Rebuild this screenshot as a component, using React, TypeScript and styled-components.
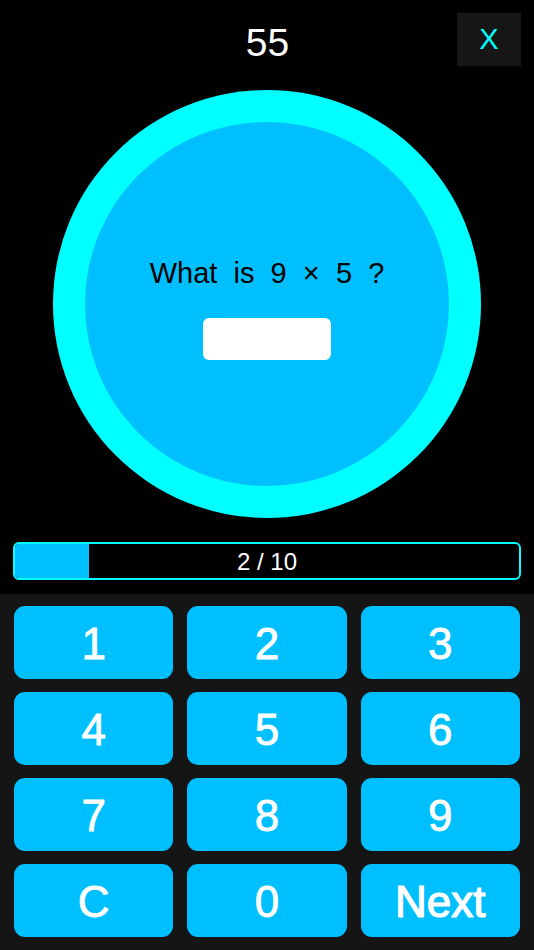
import React from "react";
import styled, { createGlobalStyle } from "styled-components";

const Global = createGlobalStyle`
  html, body { margin: 0; padding: 0; background: #000; }
  body { font-family: "Liberation Sans", Arial, sans-serif; }
  * { box-sizing: border-box; }
`;

const Page = styled.div`
  width: 534px;
  height: 950px;
  background: #000;
  display: flex;
  flex-direction: column;
  overflow: hidden;
`;

const Header = styled.div`
  display: grid;
  grid-template-columns: 64px 1fr 64px;
  align-items: center;
  padding: 13px 13px 0 14px;
  height: 66px;
`;

const Score = styled.div`
  grid-column: 2;
  text-align: center;
  color: #fff;
  font-size: 39px;
  line-height: 1;
  padding-top: 6px;
`;

const CloseButton = styled.button`
  grid-column: 3;
  width: 64px;
  height: 53px;
  border: none;
  border-radius: 0;
  background: #161616;
  color: #00ffff;
  font-family: "Liberation Sans", Arial, sans-serif;
  font-size: 29px;
  padding: 0;
  display: flex;
  align-items: center;
  justify-content: center;
`;

const Stage = styled.div`
  display: flex;
  justify-content: center;
  margin-top: 24px;
`;

const Ring = styled.div`
  width: 428px;
  height: 428px;
  border-radius: 50%;
  background: #00ffff;
  padding: 32px;
`;

const Disc = styled.div`
  width: 100%;
  height: 100%;
  border-radius: 50%;
  background: #00bfff;
  display: flex;
  flex-direction: column;
  align-items: center;
  justify-content: center;
  gap: 28px;
  padding-top: 7px;
`;

const Question = styled.div`
  color: #000;
  font-size: 29px;
  line-height: 34px;
  white-space: pre;
`;

const AnswerBox = styled.div`
  width: 128px;
  height: 42px;
  background: #fff;
  border-radius: 6px;
`;

const Progress = styled.div`
  position: relative;
  margin: 24px 13px 0 13px;
  height: 38px;
  border: 2px solid #00ffff;
  border-radius: 6px;
  background: #000;
  overflow: hidden;
  display: flex;
  align-items: center;
  justify-content: center;
`;

const Fill = styled.div<{ $pct: number }>`
  position: absolute;
  left: 0;
  top: 0;
  bottom: 0;
  width: ${(p) => p.$pct}%;
  background: #00bfff;
`;

const ProgressLabel = styled.span`
  position: relative;
  color: #fff;
  font-size: 24px;
  padding-top: 1px;
`;

const Keypad = styled.div`
  flex: 1;
  margin-top: 14px;
  background: #151515;
  padding: 12px 14px 13px 14px;
  display: grid;
  grid-template-columns: repeat(3, 1fr);
  grid-template-rows: repeat(4, 1fr);
  column-gap: 14px;
  row-gap: 13.5px;
`;

const Key = styled.button<{ $heavy?: boolean }>`
  border: none;
  border-radius: 11px;
  background: #00bfff;
  color: #fff;
  font-family: "Liberation Sans", Arial, sans-serif;
  font-size: 44px;
  -webkit-text-stroke: ${(p) => (p.$heavy ? "1.2px" : "0.8px")} #fff;
  padding: 3px 0 0 0;
  display: flex;
  align-items: center;
  justify-content: center;
`;

const keys = ["1", "2", "3", "4", "5", "6", "7", "8", "9", "C", "0", "Next"];

export default function App() {
  return (
    <Page>
      <Global />
      <Header>
        <Score>55</Score>
        <CloseButton>X</CloseButton>
      </Header>
      <Stage>
        <Ring>
          <Disc>
            <Question>{"What  is  9  ×  5  ?"}</Question>
            <AnswerBox />
          </Disc>
        </Ring>
      </Stage>
      <Progress>
        <Fill $pct={14.7} />
        <ProgressLabel>2 / 10</ProgressLabel>
      </Progress>
      <Keypad>
        {keys.map((k) => (
          <Key key={k} $heavy={k === "Next"}>
            {k}
          </Key>
        ))}
      </Keypad>
    </Page>
  );
}
